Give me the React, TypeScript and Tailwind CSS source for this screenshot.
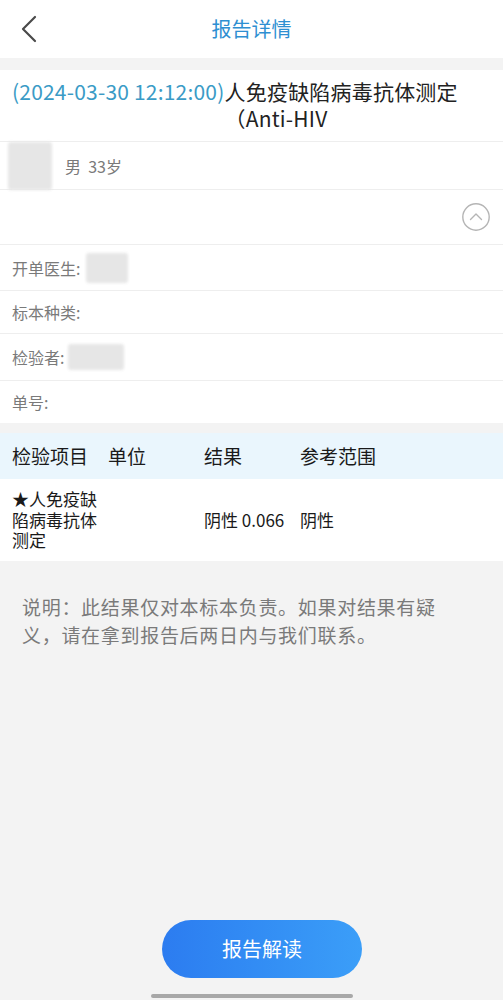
import React from 'react';

const font = { fontFamily: '"Noto Sans CJK SC", "Noto Sans", sans-serif' };

const Blob = ({ className }: { className: string }) => (
  <div className={`bg-[#e6e6e6] blur-[1.5px] rounded-[3px] ${className}`} />
);

const InfoRow = ({ label, children, h }: { label: string; children?: React.ReactNode; h: string }) => (
  <div className={`flex items-center border-t border-[#eeeeee] px-[12px] ${h}`}>
    <span className="text-[16px] text-[#7a7a7a]">{label}</span>
    {children}
  </div>
);

export default function App() {
  return (
    <div className="min-h-[1000px] w-[503px] bg-[#f3f3f3] flex flex-col" style={font}>
      {/* header */}
      <div className="h-[58px] bg-white flex items-center">
        <div className="w-[60px] pl-[20px] flex items-center">
          <svg width="18" height="28" viewBox="0 0 18 28" fill="none">
            <path d="M15 2 L3 14 L15 26" stroke="#4a4a4a" strokeWidth="2.2" strokeLinecap="round" strokeLinejoin="round" />
          </svg>
        </div>
        <div className="flex-1 text-center text-[20px] text-[#2e8fd2]">报告详情</div>
        <div className="w-[60px]" />
      </div>
      <div className="h-[12px]" />

      {/* report info */}
      <div className="bg-white">
        <div className="flex px-[12px] pt-[8px] pb-[9px] text-[21px] leading-[27px] tracking-[0.2px]">
          <span className="text-[#3a9bc6] shrink-0">(2024-03-30 12:12:00)</span>
          <span className="text-[#222222]">人免疫缺陷病毒抗体测定（Anti-HIV</span>
        </div>
        <div className="flex items-center border-t border-[#eeeeee] h-[48px] pl-[8px]">
          <Blob className="w-[44px] h-[48px]" />
          <span className="ml-[13px] text-[16px] text-[#7a7a7a]">男&nbsp;&nbsp;33岁</span>
        </div>
        <div className="flex items-center justify-end border-t border-[#eeeeee] h-[55px] pr-[12px]">
          <svg width="30" height="30" viewBox="0 0 30 30" fill="none">
            <circle cx="15" cy="15" r="13.2" stroke="#b5b5b5" strokeWidth="1.4" />
            <path d="M9.5 17.5 L15 12 L20.5 17.5" stroke="#b5b5b5" strokeWidth="1.4" strokeLinecap="round" strokeLinejoin="round" />
          </svg>
        </div>
        <InfoRow label="开单医生:" h="h-[46px]">
          <Blob className="ml-[6px] w-[42px] h-[30px]" />
        </InfoRow>
        <InfoRow label="标本种类:" h="h-[43px]" />
        <InfoRow label="检验者:" h="h-[47px]">
          <Blob className="ml-[4px] w-[56px] h-[26px]" />
        </InfoRow>
        <InfoRow label="单号:" h="h-[43px]" />
      </div>
      <div className="h-[10px]" />

      {/* results table */}
      <div className="grid grid-cols-[96px_96px_96px_1fr] px-[12px] h-[46px] items-center bg-[#eaf6fd] text-[19px] text-[#1a1a1a]">
        <span>检验项目</span>
        <span>单位</span>
        <span>结果</span>
        <span>参考范围</span>
      </div>
      <div className="grid grid-cols-[96px_96px_96px_1fr] px-[12px] py-[10px] items-center bg-white text-[17px] leading-[20.5px] text-[#1a1a1a]">
        <span className="pr-[8px]">★人免疫缺陷病毒抗体测定</span>
        <span />
        <span>阴性 0.066</span>
        <span>阴性</span>
      </div>

      {/* note */}
      <p className="mt-[32px] ml-[22px] w-[432px] text-[19px] tracking-[0.7px] leading-[28px] text-[#7a7a7a]">
        说明：此结果仅对本标本负责。如果对结果有疑义，请在拿到报告后两日内与我们联系。
      </p>

      <div className="flex-1" />

      <div className="flex justify-center pl-[21px]">
        <button className="w-[200px] h-[58px] rounded-full bg-gradient-to-r from-[#2c7cf0] to-[#3b9ef8] text-white text-[20px]">
          报告解读
        </button>
      </div>
      <div className="flex justify-center mt-[16px] mb-[2px]">
        <div className="w-[202px] h-[4px] rounded-full bg-[#a8a8a8]" />
      </div>
    </div>
  );
}
